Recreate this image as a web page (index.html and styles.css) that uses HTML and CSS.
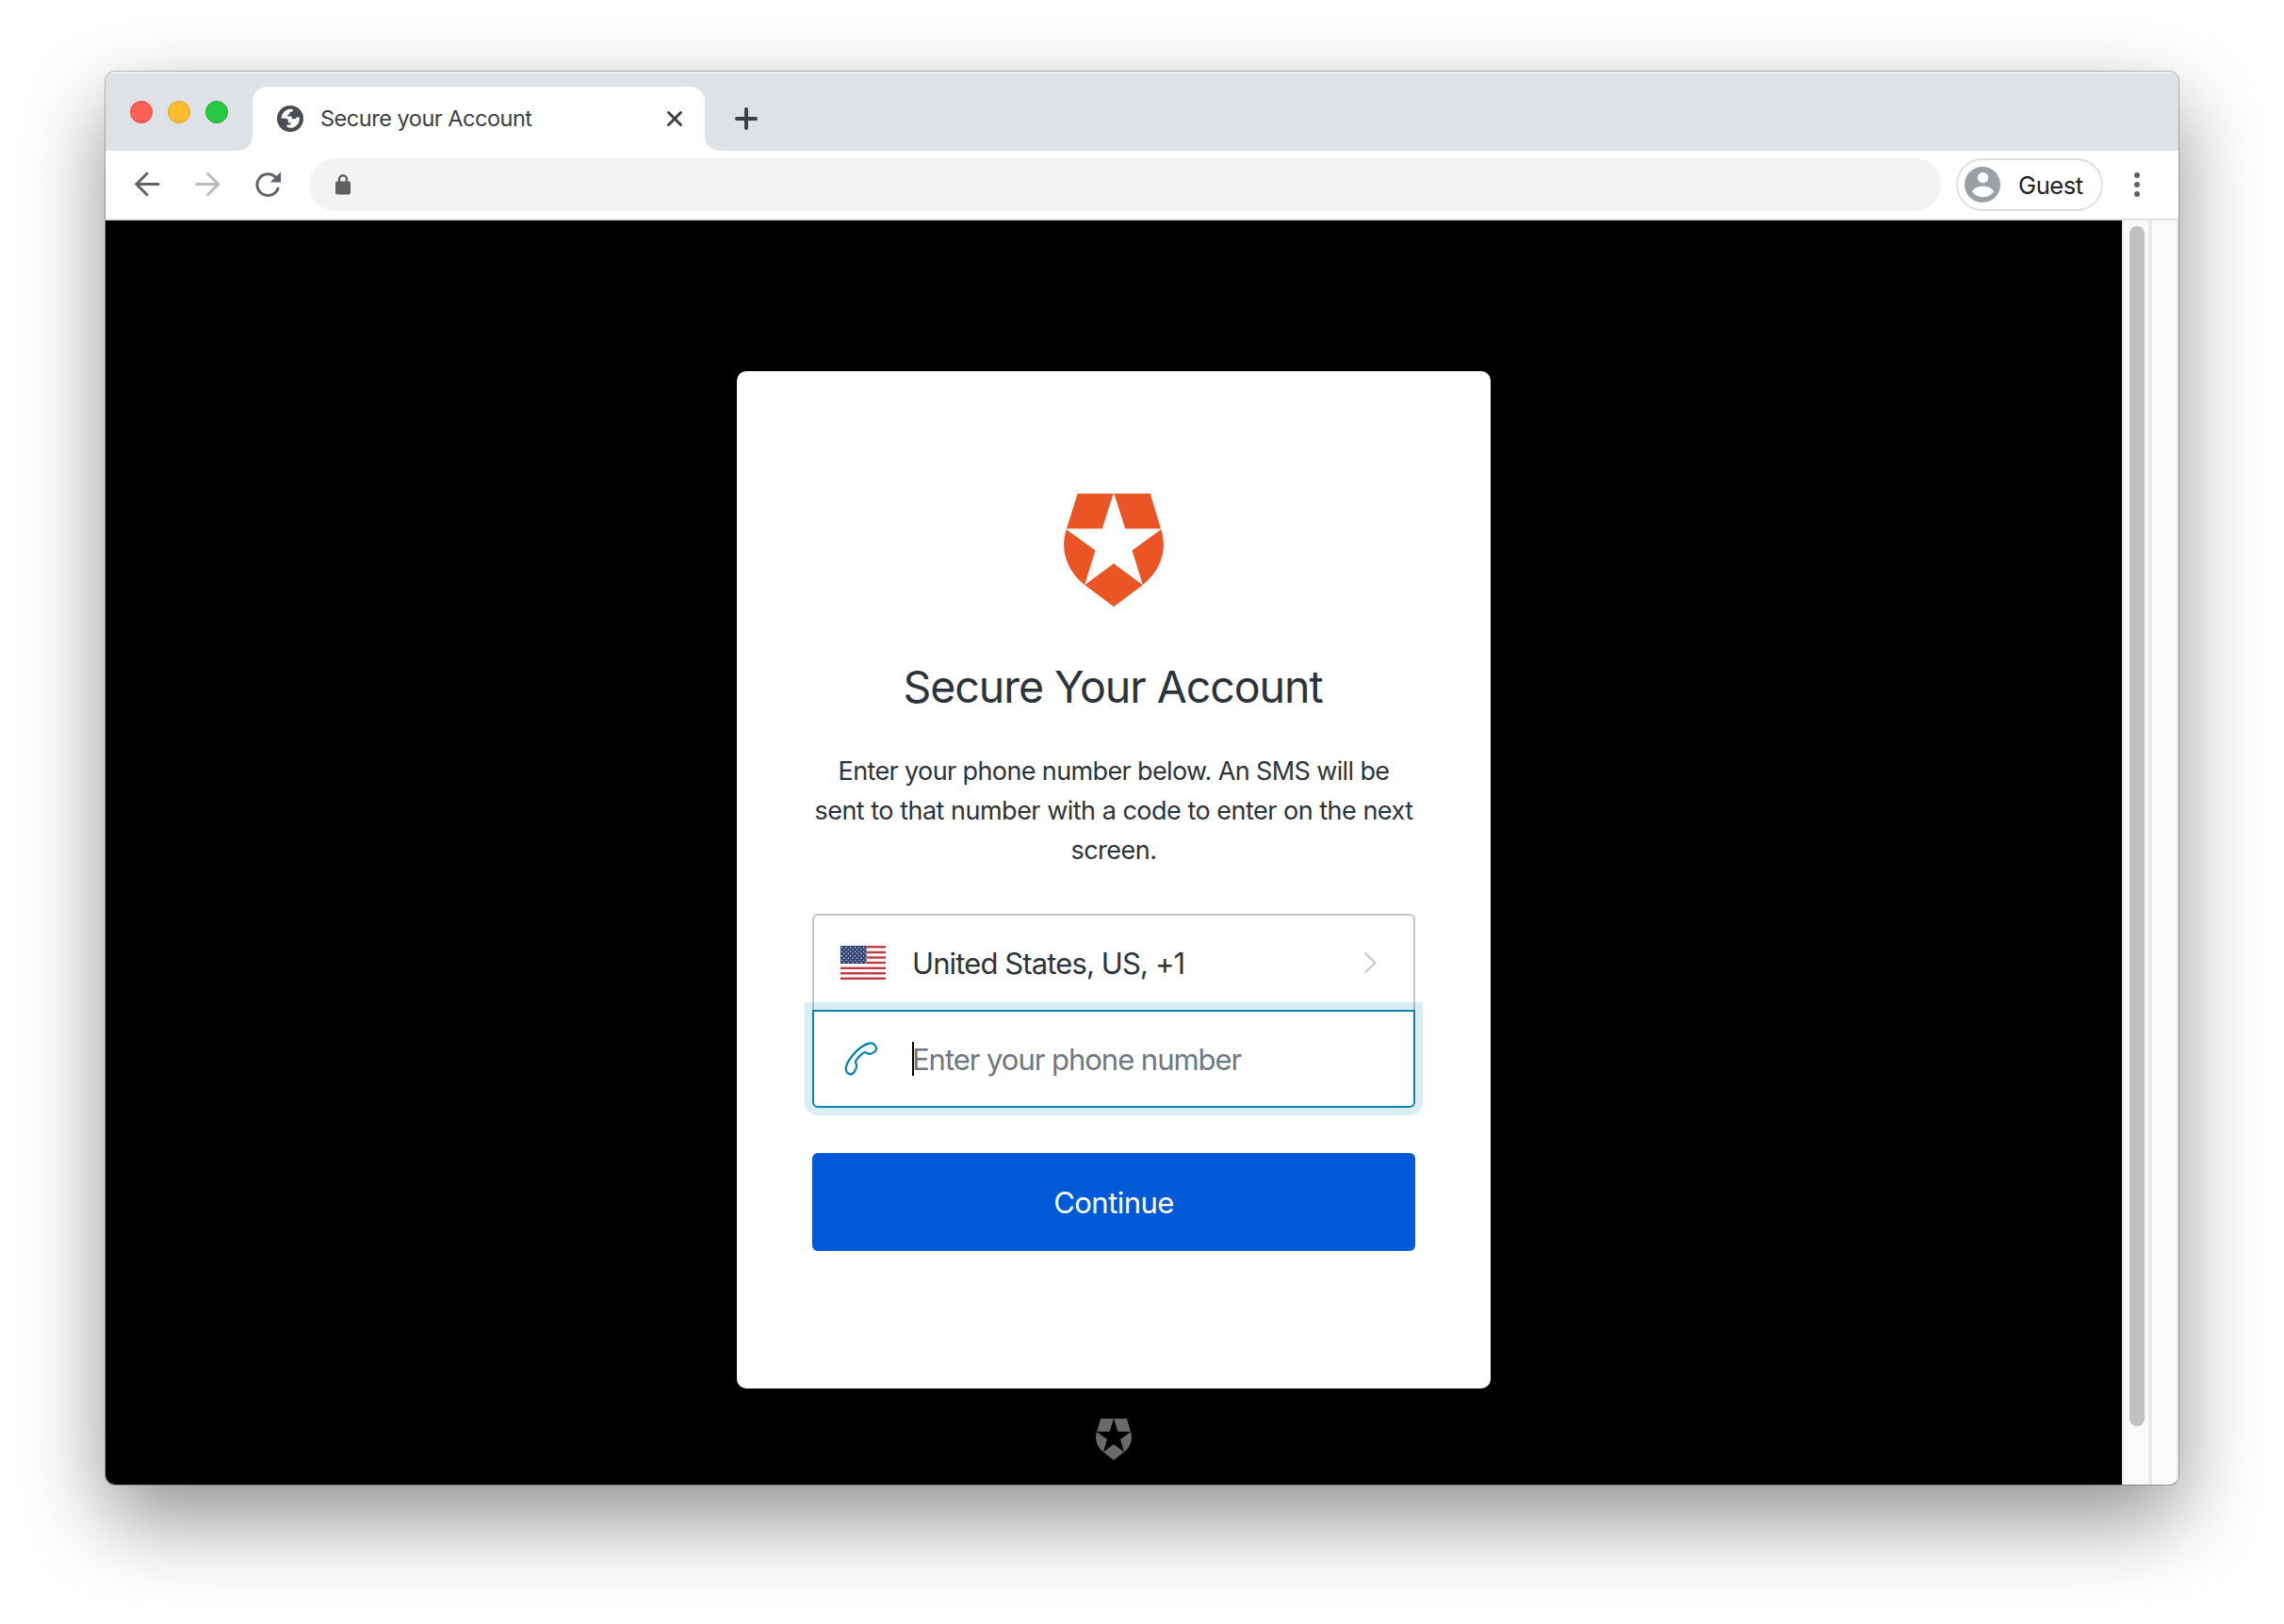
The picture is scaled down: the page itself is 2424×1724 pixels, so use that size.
FILE: index.html
```
<!DOCTYPE html>
<html lang="en">
<head>
<meta charset="utf-8">
<title>Secure your Account</title>
<link rel="stylesheet" href="styles.css">
</head>
<body>
<svg class="defs" width="0" height="0" aria-hidden="true">
  <symbol id="shield" viewBox="0 0 320 361" preserveAspectRatio="none">
    <path d="M44 0H159L123 112H9ZM161 0H277L311 112H197ZM8 114L101 181L67 291C20 255-16 190 8 114ZM312 114L219 181L253 291C300 255 336 190 312 114ZM160 223L253 292L160 361L67 292Z"/>
  </symbol>
</svg>
<div class="window">
  <header class="tabstrip">
    <div class="lights">
      <span class="light red"></span><span class="light yellow"></span><span class="light green"></span>
    </div>
    <div class="tab">
      <svg class="globe" viewBox="0 0 28 28"><circle cx="14" cy="14" r="14" fill="#4a4d51"/><path fill="#fff" d="M4.6 13.6C4.7 8.200 8.900 4 14.500 3.800L17 4.200C17 6 16 6.600 14.400 6.800C13.300 7 13.700 8.300 12.600 9.300C11.700 10 11 10.200 11.100 11.600H14.500C15.800 11.800 15.900 13.200 15.900 14.300H18.600C20 14.300 20.300 13.400 20.600 12.400H23.800C24.500 18.400 20.300 23.800 14 23.800L10.600 23.100V20.500H13C14.300 20.500 14.600 19.600 14.600 18.200H11.800V16.400C11.800 14.800 11 13.800 9.500 13.800Z"/></svg>
      <span class="tab-title">Secure your Account</span>
      <svg class="close" viewBox="0 0 20 20"><path d="M3.500 3.500L16.500 16.500M16.500 3.500L3.500 16.500"/></svg>
    </div>
    <svg class="plus" viewBox="0 0 24 24"><path d="M12 2V22M2 12H22"/></svg>
  </header>
  <div class="toolbar">
    <svg class="nav back" viewBox="0 0 28 28"><path d="M26 13.500H3M14 2.300L2.800 13.500L14 24.700"/></svg>
    <svg class="nav forward" viewBox="0 0 28 28"><path d="M2.500 13.500H25.500M14.500 2.300L25.700 13.500L14.500 24.700"/></svg>
    <svg class="nav reload" viewBox="0 0 28 28"><path d="M22.700 6.400A11.400 11.400 0 1 0 25 18.200"/><path class="head" d="M28 0.500V11.500H16.800Z"/></svg>
    <div class="omnibox">
      <svg class="lock" viewBox="0 0 16 22"><rect y="7.500" width="16" height="14" rx="2"/><path d="M4 8V5.200a4 4 0 0 1 8 0V8"/></svg>
    </div>
    <div class="guest">
      <svg class="avatar" viewBox="0 0 38 38"><circle cx="19" cy="19" r="19" fill="#9aa0a6"/><circle cx="19.500" cy="11.600" r="5.700" fill="#fff"/><path fill="#fff" d="M8 26.500C10 22.500 14 20.800 19.400 20.800S29 22.500 31 26.500C28 30.300 24 32.300 19.400 32.300S11 30.300 8 26.500Z"/></svg>
      <span class="guest-name">Guest</span>
    </div>
    <svg class="dots" viewBox="0 0 6 26"><circle cx="3" cy="3" r="3"/><circle cx="3" cy="13" r="3"/><circle cx="3" cy="23" r="3"/></svg>
  </div>
  <div class="viewport">
    <main class="page">
      <section class="card">
        <svg class="logo"><use href="#shield"/></svg>
        <h1>Secure Your Account</h1>
        <p><span class="tight">Enter your phone number below. An SMS will be</span><br>sent to that number with a code to enter on the next<br>screen.</p>
        <div class="field country">
          <svg class="flag" viewBox="0 0 48 36">
            <defs><pattern id="stars" width="4.600" height="4.600" patternUnits="userSpaceOnUse"><circle cx="1.500" cy="1.600" r=".8"/><circle cx="3.800" cy="3.900" r=".8"/></pattern></defs>
            <rect width="48" height="36" fill="#fff"/>
            <path stroke="#bf3f49" stroke-width="2.400" d="M0 1.200H48M0 7H48M0 12.500H48M0 18H48M0 23.700H48M0 29.200H48M0 34.800H48"/>
            <rect width="28" height="20" fill="#fff"/><rect width="27.700" height="19" fill="#25376b"/><rect width="27.700" height="18.600" fill="url(#stars)"/>
          </svg>
          <span class="country-name">United States, US, +1</span>
          <svg class="chevron" viewBox="0 0 14 24"><path d="M2.500 1.500L13.500 12L2.500 22.500"/></svg>
        </div>
        <div class="field phone">
          <svg class="handset" viewBox="0 0 36 36"><path d="M27.500 1.500C30 1.100 31.800 2.400 32.900 4.400C34.800 6.800 35 8.100 32.600 10C30.300 11.900 28.300 13.700 26 12.700L22.500 11.100C21.300 10.700 20.300 11.500 18.900 12.700C16 15.300 14.300 17.200 12.400 19.800C11.600 21 12 22.200 12.900 24C14 26.600 12.700 28.600 11 31.300C9.300 33.900 8.400 35 6 34.400C3.200 33.600 1.900 31.500 1.700 29C1.700 24.600 4.800 19.300 8.700 14.500C13.700 8.400 20.700 2.500 27.500 1.500Z"/></svg>
          <span class="caret"></span>
          <span class="placeholder">Enter your phone number</span>
        </div>
        <button class="continue" type="button">Continue</button>
      </section>
      <svg class="footer-logo"><use href="#shield"/></svg>
    </main>
    <div class="track"><div class="thumb"></div></div>
    <div class="gutter"></div>
  </div>
</div>
</body>
</html>
```

FILE: styles.css
```
* { box-sizing: border-box; }
body {
  margin: 0;
  padding: 76px 112px 148px;
  width: 2424px;
  height: 1724px;
  overflow: hidden;
  background: #fff;
  font-family: Inter, "Liberation Sans", sans-serif;
}
svg { display: block; flex: none; overflow: visible; }
.defs { position: absolute; }

.window {
  display: flex;
  flex-direction: column;
  width: 2200px;
  height: 1500px;
  border-radius: 10px;
  overflow: hidden;
  background: #fff;
  box-shadow: 0 0 0 1px rgba(0,0,0,.25), 0 36px 88px rgba(0,0,0,.44);
}

/* tab strip */
.tabstrip {
  display: flex;
  align-items: flex-start;
  height: 84px;
  background: #dee1e6;
  box-shadow: inset 0 2px 0 #eceef1;
}
.lights { display: flex; gap: 16px; width: 156px; padding: 31px 0 0 26px; }
.light { width: 24px; height: 24px; border-radius: 50%; border: 1px solid; }
.red { background: #ff5f57; border-color: #e14640; }
.yellow { background: #ffbd2e; border-color: #dfa123; }
.green { background: #28ca42; border-color: #1dad2b; }
.tab {
  position: relative;
  display: flex;
  align-items: center;
  width: 480px;
  height: 68px;
  margin-top: 16px;
  padding: 0 22px 0 26px;
  border-radius: 16px 16px 0 0;
  background: #fff;
}
.tab::before, .tab::after {
  content: "";
  position: absolute;
  bottom: 0;
  width: 16px;
  height: 16px;
}
.tab::before { left: -16px; background: radial-gradient(circle at 0 0, transparent 15.500px, #fff 16.500px); }
.tab::after { right: -16px; background: radial-gradient(circle at 100% 0, transparent 15.500px, #fff 16.500px); }
.globe { width: 28px; height: 28px; }
.tab-title { flex: 1; margin-left: 18px; font-size: 23.5px; line-height: 30px; letter-spacing: -.48px; color: #3c4043; }
.close { width: 20px; height: 20px; fill: none; stroke: #3c4043; stroke-width: 2.900; stroke-linecap: round; }
.plus { width: 24px; height: 24px; margin: 38px 0 0 32px; fill: none; stroke: #3c4043; stroke-width: 4; stroke-linecap: round; }

/* toolbar */
.toolbar {
  display: flex;
  align-items: center;
  height: 74px;
  padding: 0 41px 0 30px;
  border-bottom: 2px solid #dee1e6;
}
.nav { width: 28px; height: 28px; fill: none; stroke: #5f6368; stroke-width: 3; stroke-linecap: round; }
.forward { margin-left: 36px; stroke: #babcbe; }
.reload { margin-left: 36px; }
.reload .head { fill: #5f6368; stroke: none; }
.omnibox {
  display: flex;
  align-items: center;
  flex: 1;
  height: 56px;
  margin-left: 30px;
  padding-left: 28px;
  border-radius: 28px;
  background: #f1f3f4;
}
.lock { width: 16px; height: 22px; fill: #5f6061; }
.lock path { fill: none; stroke: #5f6061; stroke-width: 2.400; }
.guest {
  display: flex;
  align-items: center;
  width: 156px;
  height: 56px;
  margin-left: 16px;
  padding-left: 7px;
  border: 2px solid #dfe0e1;
  border-radius: 28px;
  font-size: 25.5px;
  line-height: 32px;
  letter-spacing: -.4px;
  color: #202124;
}
.guest-name { padding-top: 2px; }
.avatar { width: 38px; height: 38px; margin-right: 19px; }
.dots { width: 6px; height: 26px; margin-left: 33px; fill: #5f6368; }

/* page area */
.viewport { display: flex; flex: 1; background: #fafafa; }
.page { display: flex; flex-direction: column; align-items: center; width: 2140px; padding-top: 160px; background: #000; }
.track { width: 28px; padding: 6px 4px 0 6px; border-left: 2px solid #ececec; }
.thumb { width: 16px; height: 1274px; border-radius: 8px; background: #c1c1c1; }
.gutter { width: 32px; border-left: 4px solid #e9e9e9; border-right: 2px solid #ededed; }

.card {
  display: flex;
  flex-direction: column;
  align-items: center;
  width: 800px;
  height: 1080px;
  padding: 130px 80px 0;
  border-radius: 10px;
  background: #fff;
  color: #2d333a;
}
.logo { width: 106px; height: 120px; fill: #eb5424; }
h1 {
  margin: 56px 0 0;
  padding-right: 2px;
  font-size: 46.5px;
  line-height: 58px;
  font-weight: 400;
  letter-spacing: -1.05px;
  white-space: nowrap;
}
p {
  margin: 40px 0 0;
  font-size: 27px;
  line-height: 42px;
  letter-spacing: -.5px;
  text-align: center;
  white-space: nowrap;
}
.tight { letter-spacing: -.62px; }
.field { display: flex; align-items: center; width: 640px; font-size: 31px; line-height: 40px; white-space: nowrap; }
.country {
  height: 102px;
  margin-top: 46px;
  padding: 0 40px 0 28px;
  border: 2px solid #c2c8d0;
  border-bottom: 0;
  border-radius: 6px 6px 0 0;
}
.flag { width: 48px; height: 36px; }
.flag pattern { fill: #e8eaf2; }
.country-name { flex: 1; margin-left: 28px; padding-top: 2px; letter-spacing: -.88px; }
.chevron { width: 14px; height: 24px; fill: none; stroke: #c5c9d4; stroke-width: 2.200; }
.phone {
  position: relative;
  height: 104px;
  padding-left: 32px;
  border: 2px solid #0a84ae;
  border-radius: 0 0 6px 6px;
  box-shadow: 0 0 0 8px rgba(10,132,174,.15);
}
.handset { width: 36px; height: 36px; fill: none; stroke: #0a84ae; stroke-width: 2.300; stroke-linejoin: round; }
.caret { width: 2px; height: 36px; margin-left: 36px; background: #000; }
.placeholder { margin-left: -2px; padding-top: 2px; letter-spacing: -1.03px; color: #6f7780; }
.continue {
  width: 640px;
  height: 104px;
  margin-top: 48px;
  padding: 1px 0 0;
  border: 0;
  border-radius: 6px;
  background: #0059d6;
  color: #fff;
  font: 400 31px/40px Inter, "Liberation Sans", sans-serif;
  letter-spacing: -.55px;
}
.footer-logo { width: 38px; height: 44px; margin-top: 32px; fill: #6a6a6b; }
```
